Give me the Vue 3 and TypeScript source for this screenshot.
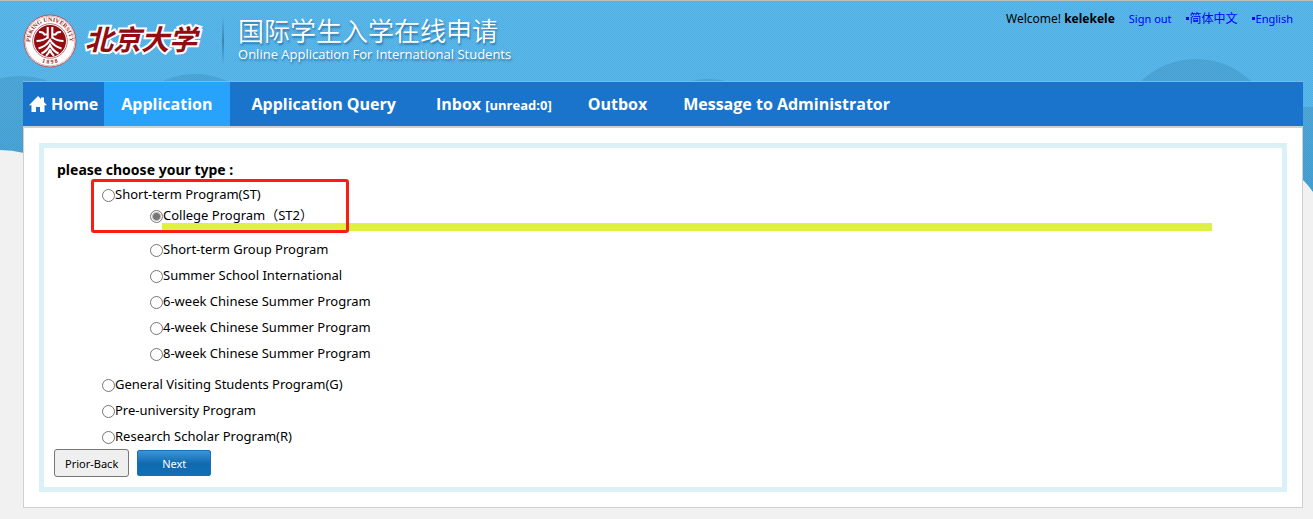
<script setup lang="ts">
import { ref } from 'vue'

interface Program {
  id: string
  label: string
  marked?: boolean
  children?: Program[]
}

const selected = ref<string>('st2')

const programs: Program[] = [
  {
    id: 'st',
    label: 'Short-term Program(ST)',
    children: [
      { id: 'st2', label: 'College Program（ST2）', marked: true },
      { id: 'group', label: 'Short-term Group Program' },
      { id: 'ssi', label: 'Summer School International' },
      { id: 'w6', label: '6-week Chinese Summer Program' },
      { id: 'w4', label: '4-week Chinese Summer Program' },
      { id: 'w8', label: '8-week Chinese Summer Program' },
    ],
  },
  { id: 'g', label: 'General Visiting Students Program(G)' },
  { id: 'pre', label: 'Pre-university Program' },
  { id: 'r', label: 'Research Scholar Program(R)' },
]
</script>

<template>
  <div class="page">
    <div class="sky" aria-hidden="true">
      <div class="bank bank-left">
        <svg width="760" height="250">
          <g fill="#2a6f96" fill-opacity="0.22">
            <circle cx="20" cy="156" r="80" />
            <circle cx="195" cy="150" r="76" />
            <circle cx="708" cy="155" r="76" />
          </g>
          <path d="M0 150Q12 150 24 153L80 180V250H0Z" fill="#f1f1f1" />
        </svg>
      </div>
      <div class="bank bank-right">
        <svg width="260" height="250">
          <g fill="#2a6f96" fill-opacity="0.22">
            <circle cx="143" cy="139" r="80" />
            <path d="M240 107H260V200H240Z" />
          </g>
          <path d="M240 172Q252 180 260 192V250H240Z" fill="#f1f1f1" />
        </svg>
      </div>
    </div>

    <header class="header">
      <div class="brand">
        <svg class="seal" width="54" height="54" viewBox="0 0 54 54" role="img" aria-label="Peking University">
          <defs>
            <path id="seal-top" d="M10.1 37A19.6 19.6 0 1 1 43.9 37" />
            <path id="seal-bottom" d="M13 45A23 23 0 0 0 41 45" />
          </defs>
          <circle cx="27" cy="27" r="26" fill="#fff" stroke="#b4545a" />
          <circle cx="27" cy="27" r="24.8" fill="none" stroke="#c88a8e" stroke-width="0.6" />
          <circle cx="27" cy="27" r="17.3" fill="#fff" stroke="#b4545a" stroke-width="0.8" />
          <circle cx="27" cy="27" r="16" fill="#920c12" />
          <text class="seal-text"><textPath href="#seal-top" startOffset="50%" text-anchor="middle">PEKING UNIVERSITY</textPath></text>
          <text class="seal-text"><textPath href="#seal-bottom" startOffset="50%" text-anchor="middle">1 8 9 8</textPath></text>
          <g fill="none" stroke="#fff" stroke-width="2.1">
            <path d="M24.700 13V24.500M29.300 13V24.500" />
            <path d="M16 18Q20 17.500 21.500 20.500H24.700M38 18Q34 17.500 32.500 20.500H29.300" />
            <path d="M13.500 27Q20 27 24.700 23.500M40.500 27Q34 27 29.300 23.500" />
            <path d="M15.500 34.500Q23 32.500 27 26Q31 32.500 38.500 34.500" />
            <path d="M18.500 39.500Q24.500 36.500 27 31Q29.500 36.500 35.500 39.500" />
            <path d="M23 42Q26.500 39 27 35.500Q27.500 39 31 42" />
          </g>
        </svg>
        <span class="wordmark">北京大学</span>
        <span class="divider"></span>
        <div class="titles">
          <h1>国际学生入学在线申请</h1>
          <p>Online Application For International Students</p>
        </div>
      </div>
      <div class="account">
        <span class="welcome">Welcome! <b>kelekele</b></span>
        <a href="#signout">Sign out</a>
        <a href="#zh" class="lang zh">简体中文</a>
        <a href="#en" class="lang">English</a>
      </div>
    </header>

    <div class="shell">
      <nav class="nav">
        <a href="#home" class="home">
          <svg width="18" height="18" viewBox="0 0 18 18" aria-hidden="true">
            <path d="M9 1L12 4V2.500H15V7L18 10.200H15.500V17H11V12H7V17H2.500V10.200H0Z" fill="#fff" />
          </svg>
          Home
        </a>
        <a href="#application" class="active">Application</a>
        <a href="#query" class="query">Application Query</a>
        <a href="#inbox">Inbox <small>[unread:0]</small></a>
        <a href="#outbox">Outbox</a>
        <a href="#message">Message to Administrator</a>
      </nav>

      <main class="panel">
        <form class="box" @submit.prevent>
          <h2>please choose your type :</h2>
          <div class="outline" aria-hidden="true"></div>
          <ul class="programs">
            <li v-for="p in programs" :key="p.id">
              <label class="option">
                <input v-model="selected" type="radio" name="program" :value="p.id" />
                <span>{{ p.label }}</span>
              </label>
              <ul v-if="p.children" class="children">
                <li v-for="c in p.children" :key="c.id" :class="{ marked: c.marked }">
                  <label class="option">
                    <input v-model="selected" type="radio" name="program" :value="c.id" />
                    <span>{{ c.label }}</span>
                  </label>
                </li>
              </ul>
            </li>
          </ul>
          <div class="actions">
            <button type="button" class="back">Prior-Back</button>
            <button type="submit" class="next">Next</button>
          </div>
        </form>
      </main>
    </div>
  </div>
</template>

<style>
body {
  margin: 0;
  background: #f1f1f1;
}
</style>

<style scoped>
.page {
  position: relative;
  box-sizing: border-box;
  min-height: 100vh;
  padding-bottom: 11px;
  border-top: 1px solid #bdbdbd;
  color: #000;
  font-family: "Noto Sans", "Noto Sans CJK SC", sans-serif;
  font-size: 14px;
}
.sky {
  position: absolute;
  inset: 0 0 auto 0;
  height: 200px;
  overflow: hidden;
  background:
    repeating-conic-gradient(rgba(20, 110, 170, 0.16) 0 25%, transparent 0 50%) 0 0 / 2px 2px,
    linear-gradient(#5bb9ec 0, #5bb9ec 110px, #4fb0e5 200px);
}
.bank {
  position: absolute;
  top: -1px;
}
.bank-left {
  left: 0;
}
.bank-right {
  right: 0;
}
.header {
  position: relative;
  display: flex;
  justify-content: space-between;
  height: 80px;
  padding: 0 20px 0 23px;
}
.brand {
  display: flex;
  align-items: center;
}
.seal-text {
  fill: #a01c22;
  font-family: "Liberation Serif", serif;
  font-size: 6px;
  font-weight: bold;
}
.wordmark {
  margin: 0 0 6px 8px;
  color: #920c12;
  font-family: "Noto Sans CJK SC", sans-serif;
  font-size: 28px;
  font-style: italic;
  font-weight: 700;
  line-height: 40px;
  paint-order: stroke fill;
  -webkit-text-stroke: 4px #fff;
}
.divider {
  width: 2px;
  height: 48px;
  margin: 0 14px 0 25px;
  background: linear-gradient(transparent, #3c83b4 50%, transparent);
}
.titles {
  margin-bottom: 4px;
  color: #fff;
  text-shadow: 1px 2px 2px rgba(20, 80, 130, 0.6);
}
.titles h1 {
  margin: 0;
  font-family: "Noto Sans CJK SC", sans-serif;
  font-size: 26px;
  font-weight: 350;
  line-height: 30px;
}
.titles p {
  margin: 0;
  font-family: "Open Sans", sans-serif;
  font-size: 13px;
  line-height: 18px;
}
.account {
  display: flex;
  gap: 14px;
  padding-top: 9px;
  font-size: 11px;
  line-height: 18px;
}
.welcome,
.zh {
  font-size: 12px;
}
.account a {
  color: #00f;
  text-decoration: none;
}
.lang::before {
  display: inline-block;
  width: 3px;
  height: 3px;
  margin-right: 1px;
  background: currentColor;
  vertical-align: 3px;
  content: "";
}
.shell {
  position: relative;
  margin: 0 10px 0 23px;
}
.nav {
  display: flex;
  height: 44px;
  border-top: 1px solid #7db6ea;
  border-bottom: 2px solid #d0d0d0;
  background: #1a74cc;
  font-family: "Open Sans", sans-serif;
  font-size: 16px;
  font-weight: 700;
  line-height: 44px;
}
.nav a {
  padding: 0 18px;
  color: #fff;
  text-decoration: none;
  white-space: nowrap;
}
.nav a.home {
  display: flex;
  align-items: center;
  gap: 4px;
  padding: 0 6px;
}
.nav a.active {
  padding: 0 17px;
  background: #27a3fb;
}
.nav a.query {
  padding: 0 22px;
}
.nav small {
  font-size: 13px;
}
.panel {
  padding: 15px;
  border: 1px solid #d0d0d0;
  border-top: 0;
  background: #fff;
}
.box {
  position: relative;
  padding: 11px 10px 10px;
  border: 5px solid #daf1f6;
}
h2 {
  margin: 0 0 0 3px;
  font-size: 14px;
  font-weight: 700;
  line-height: 22px;
}
ul {
  margin: 0;
  padding: 0;
  list-style: none;
}
.programs {
  margin-left: 48px;
  font-size: 13px;
}
.children {
  margin: 0 60px 5px 48px;
}
.option {
  display: flex;
  align-items: center;
  height: 26px;
  line-height: 26px;
}
.option input {
  appearance: none;
  box-sizing: border-box;
  flex: none;
  width: 13px;
  height: 13px;
  margin: 3px 0 0;
  border: 1px solid #767676;
  border-radius: 50%;
  background: #fff;
}
.option input:checked {
  background: radial-gradient(circle, #767676 3px, #fff 5px);
}
.marked {
  margin-bottom: 5px;
}
.marked .option {
  height: 16px;
}
.marked::after {
  display: block;
  height: 8px;
  margin-left: 12px;
  background: #dff045;
  content: "";
}
.outline {
  position: absolute;
  top: 31px;
  left: 47px;
  z-index: 1;
  box-sizing: border-box;
  width: 258px;
  height: 54px;
  border: 3px solid #fb1c14;
  border-radius: 3px;
  pointer-events: none;
}
.actions {
  display: flex;
  align-items: center;
  gap: 8px;
}
button {
  box-sizing: border-box;
  font-family: inherit;
  font-size: 11px;
}
.back {
  height: 28px;
  padding: 0 10px;
  border: 1px solid #767676;
  border-radius: 3px;
  background: #efefef;
  color: #000;
}
.next {
  width: 74px;
  height: 26px;
  padding: 0;
  border: 1px solid #1a70b4;
  border-radius: 2px;
  background: linear-gradient(#3c94d6, #0f69ae 55%, #1270b8);
  color: #fff;
}
</style>
